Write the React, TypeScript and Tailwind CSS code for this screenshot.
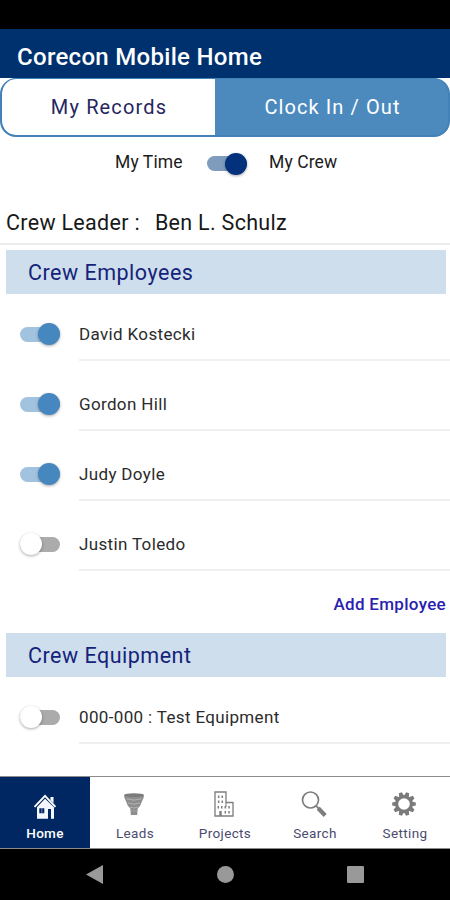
// src/App.tsx
import { useState } from 'react';
import type { ReactNode } from 'react';

interface CrewItem {
  id: string;
  name: string;
  active: boolean;
}

const EMPLOYEES: CrewItem[] = [
  { id: 'e1', name: 'David Kostecki', active: true },
  { id: 'e2', name: 'Gordon Hill', active: true },
  { id: 'e3', name: 'Judy Doyle', active: true },
  { id: 'e4', name: 'Justin Toledo', active: false },
];

const EQUIPMENT: CrewItem[] = [
  { id: 'q1', name: '000-000 : Test Equipment', active: false },
];

interface SwitchProps {
  on: boolean;
  dark?: boolean;
  onChange: () => void;
}

function Switch({ on, dark = false, onChange }: SwitchProps) {
  const track = !on ? 'bg-[#ababab]' : dark ? 'bg-[#7f9cbc]' : 'bg-[#a2c3df]';
  const thumb = !on ? 'bg-white' : dark ? 'bg-[#03317b]' : 'bg-[#4687c0]';
  return (
    <button role="switch" aria-checked={on} onClick={onChange} className="flex h-[22px] w-10 shrink-0 items-center">
      <span className={`flex h-[15px] w-full items-center rounded-full ${track} ${on ? 'justify-end' : 'justify-start'}`}>
        <span className={`h-[22px] w-[22px] shrink-0 rounded-full shadow-[0_1px_3px_rgba(0,0,0,0.35)] ${thumb}`} />
      </span>
    </button>
  );
}

function SectionTitle({ children }: { children: ReactNode }) {
  return (
    <h2 className="ml-1.5 mr-1 flex h-[44px] items-center bg-[#cfdeec] pl-[22px] pt-0.5 text-[21.5px] tracking-[0.5px] text-[#14237a]">
      {children}
    </h2>
  );
}

function CrewRow({ item, onToggle }: { item: CrewItem; onToggle: (id: string) => void }) {
  return (
    <li className="flex h-[70px] items-stretch pl-5">
      <div className="flex items-center pt-4">
        <Switch on={item.active} onChange={() => onToggle(item.id)} />
      </div>
      <div className="ml-[19px] flex flex-1 items-center border-b-2 border-[#efefef] pt-[18px] text-[17px] tracking-[0.35px] text-[#2b2b2b]">
        {item.name}
      </div>
    </li>
  );
}

function HomeIcon() {
  return (
    <svg width="24" height="30" viewBox="0 0 24 30">
      <path d="M17.500 8h3v6l-3-3z" fill="#fff" />
      <path d="M1.500 17.800 12 6.800l10.500 11" fill="none" stroke="#fff" strokeWidth="1.900" />
      <path d="M12 9.800 4 18.200V29.800h11V20h3v9.800h3V18.200zM6.300 19.200h5v5h-5z" fill="#f4f7ff" fillRule="evenodd" />
      <path d="M8.800 19.200v5" stroke="#b9c6dc" strokeWidth="0.600" />
    </svg>
  );
}

function LeadsIcon() {
  return (
    <svg width="22" height="24" viewBox="0 0 22 24" className="mr-[3px]">
      <path d="M1.200 2.800h19.600v2.400l-2 4.500-1.600 4-2.500 2.800-.5 6.500H7.800l-.5-6.500-2.500-2.800-1.600-4-2-4.500z" fill="#8e8e8e" />
      <ellipse cx="11" cy="3.200" rx="9.800" ry="1.900" fill="#7b7b7b" />
      <path d="M3.500 6.800q7.500 2.600 15 0M5 11q6 2.300 12 0M7 15.200q4 1.500 8 0" fill="none" stroke="#b5b5b5" strokeWidth="0.900" />
      <path d="M8 19h6" stroke="#a6a6a6" strokeWidth="0.800" />
    </svg>
  );
}

function ProjectsIcon() {
  return (
    <svg width="20" height="26" viewBox="0 0 20 26" fill="none" stroke="#7d7d7d" className="mr-0.5">
      <path d="M1 25V1h11v10.500h7V25z" strokeWidth="1.300" />
      <path d="M12 11.500V16" strokeWidth="1" />
      <path d="M4.700 4.500v2.500M8.300 4.500v2.500M4.700 9.500v2.500M8.300 9.500v2.500M4.300 15v2.500M7.700 15v2.500M11.300 15v2.500M15 15v2.500M11.300 20v2.500M15 20v2.500" strokeWidth="1.500" />
      <path d="M6.500 20v5" strokeWidth="2.400" />
    </svg>
  );
}

function SearchIcon() {
  return (
    <svg width="26" height="28" viewBox="0 0 26 28" fill="none" stroke="#7d7d7d" className="mr-[3px]">
      <circle cx="9.500" cy="10" r="8" strokeWidth="1.700" />
      <path d="m15 15.700 3 3.200" strokeWidth="1.800" />
      <path d="m17.200 18.300 7 7.200" strokeWidth="4.200" />
    </svg>
  );
}

function SettingIcon() {
  const teeth = Array.from({ length: 10 }, (_, i) => i * 36);
  return (
    <svg width="24" height="24" viewBox="0 0 24 24" className="mr-0.5">
      <circle cx="12" cy="12" r="7.300" fill="none" stroke="#7b7b7b" strokeWidth="3" />
      {teeth.map(a => (
        <path key={a} d="M9.400 4.500 10.400.2h3.200l1 4.300z" fill="#7b7b7b" transform={`rotate(${a + 18} 12 12)`} />
      ))}
    </svg>
  );
}

const NAV_ITEMS = [
  { label: 'Home', icon: <HomeIcon /> },
  { label: 'Leads', icon: <LeadsIcon /> },
  { label: 'Projects', icon: <ProjectsIcon /> },
  { label: 'Search', icon: <SearchIcon /> },
  { label: 'Setting', icon: <SettingIcon /> },
];

export default function App() {
  const [employees, setEmployees] = useState(EMPLOYEES);
  const [equipment, setEquipment] = useState(EQUIPMENT);
  const [myCrew, setMyCrew] = useState(true);
  const [activeNav, setActiveNav] = useState('Home');

  const toggle = (list: CrewItem[], id: string) =>
    list.map(i => (i.id === id ? { ...i, active: !i.active } : i));

  return (
    <div className="flex h-[900px] w-[450px] flex-col overflow-hidden bg-white font-[Roboto,sans-serif] leading-none">
      <div className="h-[29px] shrink-0 bg-black" />
      <header className="flex h-[49px] shrink-0 items-center bg-[#00316f] pl-[17px] pt-1.5">
        <h1 className="text-[24px] font-medium tracking-[0.3px] text-white">Corecon Mobile Home</h1>
      </header>

      {/* tabs */}
      <div className="flex h-[59px] shrink-0 overflow-hidden rounded-[16px] border-2 border-t border-[#4382b8] bg-[#4c8abd]">
        <button className="w-[213px] rounded-l-[14px] bg-white pl-px text-[20px] tracking-[1.15px] text-[#26265f]">My Records</button>
        <button className="flex-1 pl-0.5 text-[20px] tracking-[1.1px] text-white">Clock In / Out</button>
      </div>

      <main className="flex flex-1 flex-col">
        <div className="flex h-[53px] items-center text-[17.5px] tracking-[0.1px] text-[#1c1c1c]">
          <span className="w-[92px] pl-[115px] pb-0.5 box-content whitespace-nowrap">My Time</span>
          <Switch dark on={myCrew} onChange={() => setMyCrew(!myCrew)} />
          <span className="ml-[22px] pb-0.5">My Crew</span>
        </div>

        <div className="flex h-[55px] items-center gap-[15px] border-b-2 border-[#ededed] pl-1.5 pt-3 text-[21.5px] tracking-[0.3px] text-[#181818]">
          <span>Crew Leader :</span>
          <span>Ben L. Schulz</span>
        </div>

        <div className="mt-[5px]">
          <SectionTitle>Crew Employees</SectionTitle>
        </div>
        <ul className="-mt-[3px]">
          {employees.map(e => (
            <CrewRow key={e.id} item={e} onToggle={id => setEmployees(prev => toggle(prev, id))} />
          ))}
        </ul>
        <div className="flex h-[62px] items-center justify-end pt-1 pr-1">
          <button className="text-[17px] font-medium tracking-[0.3px] text-[#2a1fae]">Add Employee</button>
        </div>

        <SectionTitle>Crew Equipment</SectionTitle>
        <ul className="-mt-[3px]">
          {equipment.map(e => (
            <CrewRow key={e.id} item={e} onToggle={id => setEquipment(prev => toggle(prev, id))} />
          ))}
        </ul>
      </main>

      <nav className="flex h-[73px] shrink-0 border-y border-[#8c8c8c]">
        {NAV_ITEMS.map(({ label, icon }) => (
          <button
            key={label}
            onClick={() => setActiveNav(label)}
            className={`flex flex-1 flex-col items-center pt-3 text-[13.5px] ${activeNav === label ? 'bg-[#002761] font-medium tracking-[0.3px] text-white' : 'tracking-[0.35px] text-[#4b4b70]'}`}
          >
            <span className="flex h-[30px] items-center">{icon}</span>
            <span className="mt-2">{label}</span>
          </button>
        ))}
      </nav>

      {/* system buttons */}
      <div className="flex h-[51px] shrink-0 items-center justify-between bg-black pl-[86px] pr-[86px]">
        <svg width="17" height="19" viewBox="0 0 17 19">
          <path d="M0 9.500 17 0v19z" fill="#999" />
        </svg>
        <span className="h-[17px] w-[17px] rounded-full bg-[#999]" />
        <span className="h-[17px] w-[17px] rounded-[1px] bg-[#999]" />
      </div>
    </div>
  );
}
